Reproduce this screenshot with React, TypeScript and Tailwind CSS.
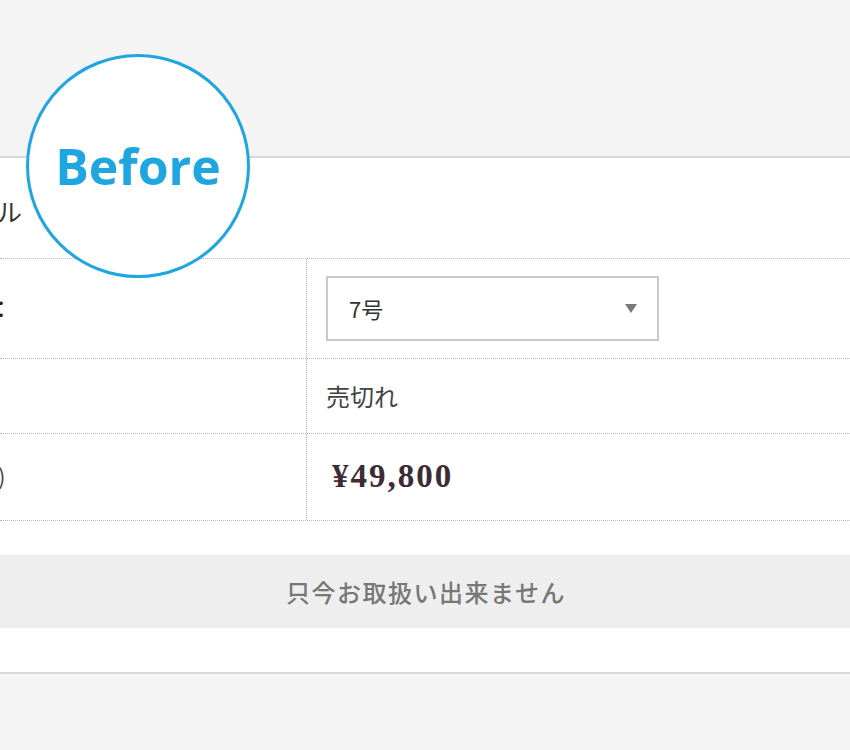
import React from "react";

const jp = { fontFamily: '"Noto Sans CJK JP", "Noto Sans", sans-serif' };

export default function App() {
  return (
    <div className="relative w-[850px] h-[750px] overflow-hidden bg-[#f4f4f4]" style={jp}>
      <div className="h-[156px]" />
      <div className="bg-white border-t-2 border-b-2 border-[#d8d8d8]">
        <div className="h-[100px] flex items-center text-[25px] text-[#333]">
          <span className="-ml-[3px] mt-[8px]">ル</span>
        </div>
        <div className="border-t border-dotted border-[#b8b8b8]">
          <div className="flex h-[100px] border-b border-dotted border-[#b8b8b8]">
            <div className="w-[307px] border-r border-dotted border-[#b8b8b8] flex items-center text-[24px] text-[#222]">
              <span className="-ml-[11px] -mt-[2px]">：</span>
            </div>
            <div className="flex-1 flex items-center pl-[19px]">
              <div className="w-[333px] h-[65px] border-2 border-[#c9c9c9] flex items-center justify-between pl-[21px] pr-[20px] text-[22px] text-[#333]">
                <span>7号</span>
                <svg width="12" height="9" viewBox="0 0 12 9">
                  <path d="M0 0 L12 0 L6 9 Z" fill="#7a7a7a" />
                </svg>
              </div>
            </div>
          </div>
          <div className="flex h-[75px] border-b border-dotted border-[#b8b8b8]">
            <div className="w-[307px] border-r border-dotted border-[#b8b8b8]" />
            <div className="flex-1 flex items-center pl-[19px] text-[24px] text-[#444]">
              <span className="-mt-[1px]">売切れ</span>
            </div>
          </div>
          <div className="flex h-[87px] border-b border-dotted border-[#b8b8b8]">
            <div className="w-[307px] border-r border-dotted border-[#b8b8b8] flex items-center text-[22px] text-[#444]">
              <span className="-ml-[2px] mt-[-4px]">)</span>
            </div>
            <div className="flex-1 flex items-center pl-[25px]">
              <span
                className="text-[33px] font-bold text-[#3d2b36] tracking-[2px]"
                style={{ fontFamily: '"Liberation Serif", "Times New Roman", serif' }}
              >
                ¥49,800
              </span>
            </div>
          </div>
        </div>
        <div className="h-[34px]" />
        <div className="h-[73px] bg-[#eeeeee] flex items-center justify-center">
          <span className="text-[24px] font-medium text-[#777] tracking-[1.5px] pl-[2px]">只今お取扱い出来ません</span>
        </div>
        <div className="h-[44px]" />
      </div>

      <div className="absolute left-[26px] top-[54px] w-[224px] h-[224px] rounded-full border-[3px] border-[#1fa6e0] bg-white flex items-center justify-center">
        <span
          className="text-[50px] font-bold text-[#1fa6e0] leading-none"
          style={{ fontFamily: '"Open Sans", "Noto Sans", sans-serif' }}
        >
          Before
        </span>
      </div>
    </div>
  );
}
